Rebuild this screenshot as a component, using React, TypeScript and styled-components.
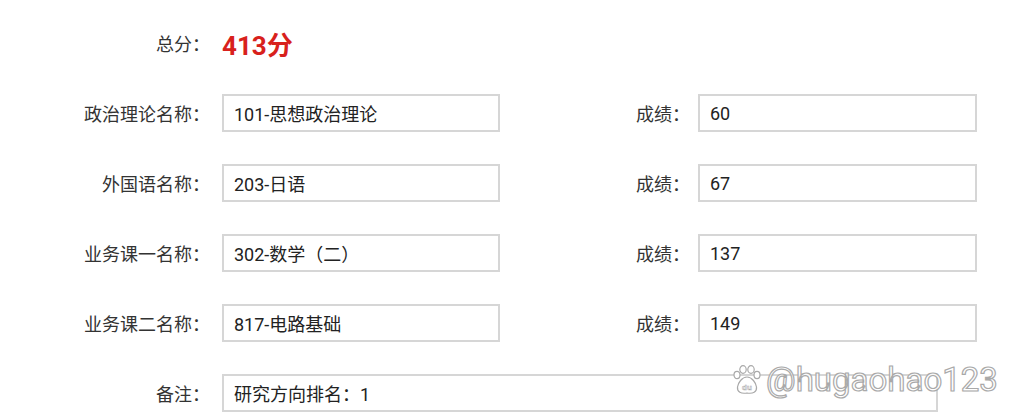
import React, { FunctionComponent } from 'react'
import styled, { createGlobalStyle } from 'styled-components'

const GlobalStyle = createGlobalStyle`
  html, body {
    margin: 0;
    padding: 0;
    background: #ffffff;
  }
  body {
    font-family: Roboto, "Noto Sans CJK SC", sans-serif;
    color: #333333;
  }
`

const Page = styled.div`
  position: relative;
  width: 1024px;
  height: 418px;
  overflow: hidden;
  padding-top: 24px;
  box-sizing: border-box;
`

const Form = styled.div`
  display: grid;
  grid-template-columns: 222px 278px 198px 279px;
  grid-auto-rows: 38px;
  row-gap: 32px;
`

const Label = styled.div<{ $pad?: number }>`
  display: flex;
  align-items: center;
  justify-content: flex-end;
  padding-right: ${(p) => p.$pad ?? 12}px;
  font-size: 18px;
  color: #333333;
  white-space: nowrap;
`

const Total = styled.div`
  display: flex;
  align-items: center;
  grid-column: 2 / 5;
  font-size: 26px;
  font-weight: 700;
  color: #d8211c;
`

const Field = styled.div<{ $wide?: boolean }>`
  display: flex;
  align-items: center;
  box-sizing: border-box;
  height: 38px;
  padding: 0 10px;
  border: 2px solid #d6d6d6;
  font-size: 18px;
  color: #222222;
  background: #ffffff;
  ${(p) => (p.$wide ? 'grid-column: 2 / 5; width: 716px;' : '')}
`

const Watermark = styled.div`
  position: absolute;
  left: 733px;
  top: 360px;
  display: flex;
  align-items: center;
  gap: 5px;
`

const WatermarkText = styled.span`
  font-family: Roboto, "Liberation Sans", sans-serif;
  font-size: 33px;
  color: rgba(255, 255, 255, 0.9);
  -webkit-text-stroke: 1.2px #a9a9a9;
`

const Paw: FunctionComponent = () => (
  <svg width="28" height="30" viewBox="0 0 28 30">
    <g fill="#ffffff" stroke="#a9a9a9" strokeWidth="1.2">
      <ellipse cx="4" cy="10" rx="3" ry="3.6" />
      <ellipse cx="10" cy="4.5" rx="3.2" ry="3.8" />
      <ellipse cx="18" cy="4.5" rx="3.2" ry="3.8" />
      <ellipse cx="24" cy="10" rx="3" ry="3.6" />
      <path d="M14 12 C9 12 5 18 4.5 22 C4 27 8 29 14 28 C20 29 24 27 23.5 22 C23 18 19 12 14 12 Z" />
    </g>
    <text x="14" y="25" textAnchor="middle" fontSize="8" fontFamily="Liberation Sans, sans-serif" fill="#ffffff" stroke="#a9a9a9" strokeWidth="0.5" fontWeight="700">du</text>
  </svg>
)

type Course = { label: string; name: string; score: string }

const courses: Course[] = [
  { label: '政治理论名称：', name: '101-思想政治理论', score: '60' },
  { label: '外国语名称：', name: '203-日语', score: '67' },
  { label: '业务课一名称：', name: '302-数学（二）', score: '137' },
  { label: '业务课二名称：', name: '817-电路基础', score: '149' },
]

const App: FunctionComponent = () => {
  return (
    <Page>
      <GlobalStyle />
      <Form>
        <Label>总分：</Label>
        <Total>413分</Total>
        {courses.map((c) => (
          <React.Fragment key={c.label}>
            <Label>{c.label}</Label>
            <Field>{c.name}</Field>
            <Label $pad={8}>成绩：</Label>
            <Field>{c.score}</Field>
          </React.Fragment>
        ))}
        <Label>备注：</Label>
        <Field $wide>研究方向排名：1</Field>
      </Form>
      <Watermark>
        <Paw />
        <WatermarkText>@hugaohao123</WatermarkText>
      </Watermark>
    </Page>
  )
}

export default App
